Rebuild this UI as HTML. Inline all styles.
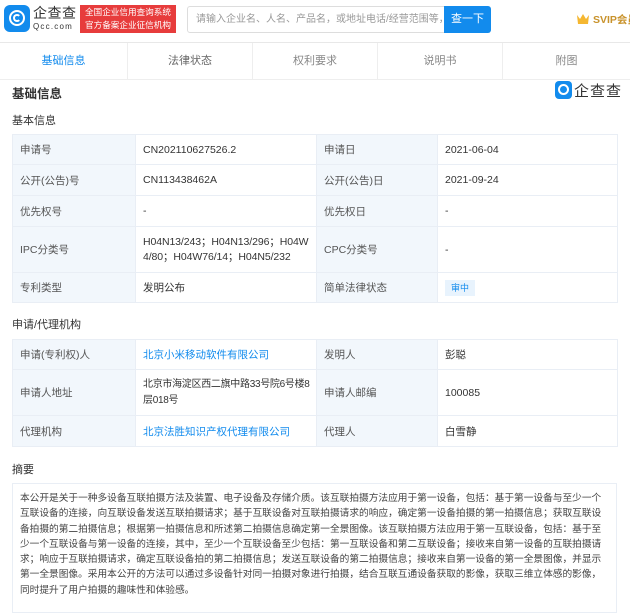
<!DOCTYPE html>
<html><head><meta charset="utf-8">
<style>
*{margin:0;padding:0;box-sizing:border-box}
body{width:630px;height:603px;overflow:hidden;background:#fff;font-family:"Liberation Sans","Noto Sans CJK SC",sans-serif;color:#333;font-size:11px;position:relative}
.abs{position:absolute}
.hdr{left:0;top:0;width:630px;height:43px;border-bottom:1px solid #e8e8e8;background:#fff}
.tabs{left:0;top:43px;width:630px;height:37px;border-bottom:1px solid #eee;display:flex}
.tabs div{flex:none;border-right:1px solid #eee;text-align:center;line-height:37px;font-size:11px;color:#666}
table{border-collapse:collapse;position:absolute;left:12px;width:605px;font-size:10.5px;table-layout:fixed}
td{border:1px solid #e9eef5;padding:0 7px;vertical-align:middle;color:#333;overflow:hidden}
td.l{background:#f2f7fc;color:#555}
a{color:#128bed;text-decoration:none}
.ab div{white-space:nowrap}
</style></head><body>
<div class="abs hdr">
 <div class="abs" style="left:4px;top:5px;width:26px;height:27px;background:#128bed;border-radius:6px"></div>
 <div class="abs" style="left:9px;top:10px;width:16px;height:16px;border:2.5px solid #fff;border-radius:50%"></div>
 <div class="abs" style="left:13px;top:14px;width:8px;height:8px;border:2px solid #fff;border-radius:50%;border-right-color:transparent"></div>
 <div class="abs" style="left:33px;top:5px;font-size:14px;line-height:16px;color:#333;letter-spacing:0.5px">企查查</div>
 <div class="abs" style="left:33px;top:22px;font-size:8px;color:#333;letter-spacing:1.2px">Qcc.com</div>
 <div class="abs" style="left:80px;top:5px;width:96px;height:28px;background:#e73c3c;color:#fff;font-size:8.6px;line-height:13px;padding-top:1px;text-align:center;white-space:nowrap">全国企业信用查询系统<br>官方备案企业征信机构</div>
 <div class="abs" style="left:187px;top:6px;width:258px;height:27px;border:1px solid #ddd;border-radius:3px 0 0 3px;color:#999;font-size:10px;line-height:25px;padding-left:8px;white-space:nowrap;overflow:hidden">请输入企业名、人名、产品名，或地址电话/经营范围等，</div>
 <div class="abs" style="left:444px;top:6px;width:47px;height:27px;background:#128bed;color:#fff;font-size:11px;line-height:27px;text-align:center;border-radius:0 3px 3px 0">查一下</div>
 <svg class="abs" style="left:576px;top:12px" width="14" height="14" viewBox="0 0 14 14"><path d="M1 3l3 4 3-5 3 5 3-4-1 9H2z" fill="#f5b731"/></svg>
 <div class="abs" style="left:593px;top:12px;font-size:10.5px;font-weight:bold;color:#c8922b;white-space:nowrap">SVIP会员</div>
</div>
<div class="abs tabs">
 <div style="width:128px;color:#128bed">基础信息</div>
 <div style="width:125px">法律状态</div>
 <div style="width:125px;color:#888">权利要求</div>
 <div style="width:125px;color:#888">说明书</div>
 <div style="width:127px;border-right:none;color:#888">附图</div>
</div>
<div class="abs" style="left:12px;top:83px;font-size:12.5px;font-weight:bold;color:#333">基础信息</div>
<div class="abs" style="left:555px;top:81px;width:17px;height:18px;background:#128bed;border-radius:4px"></div>
<div class="abs" style="left:558px;top:84px;width:11px;height:11px;border:2px solid #fff;border-radius:50%"></div>
<div class="abs" style="left:574px;top:80px;font-size:15px;color:#333;letter-spacing:1px">企查查</div>
<div class="abs" style="left:12px;top:112px;font-size:11px;color:#333">基本信息</div>
<table style="top:134px">
<colgroup><col style="width:123px"><col style="width:181px"><col style="width:121px"><col style="width:180px"></colgroup>
<tr style="height:30px"><td class="l">申请号</td><td>CN202110627526.2</td><td class="l">申请日</td><td>2021-06-04</td></tr>
<tr style="height:31px"><td class="l">公开(公告)号</td><td>CN113438462A</td><td class="l">公开(公告)日</td><td>2021-09-24</td></tr>
<tr style="height:31px"><td class="l">优先权号</td><td>-</td><td class="l">优先权日</td><td>-</td></tr>
<tr style="height:46px"><td class="l">IPC分类号</td><td style="line-height:15px;word-break:break-all;padding-right:3px;letter-spacing:-0.1px">H04N13/243；H04N13/296；H04W4/80；H04W76/14；H04N5/232</td><td class="l">CPC分类号</td><td>-</td></tr>
<tr style="height:30px"><td class="l">专利类型</td><td>发明公布</td><td class="l">简单法律状态</td><td><span style="background:#e8f3fd;color:#128bed;font-size:9px;padding:3px 6px">审中</span></td></tr>
</table>
<div class="abs" style="left:12px;top:316px;font-size:11px;color:#333">申请/代理机构</div>
<table style="top:339px">
<colgroup><col style="width:123px"><col style="width:181px"><col style="width:121px"><col style="width:180px"></colgroup>
<tr style="height:30px"><td class="l">申请(专利权)人</td><td><a>北京小米移动软件有限公司</a></td><td class="l">发明人</td><td>彭聪</td></tr>
<tr style="height:46px"><td class="l">申请人地址</td><td style="line-height:16px;white-space:nowrap;padding:0 1px 0 7px;letter-spacing:-0.3px;font-size:10px">北京市海淀区西二旗中路33号院6号楼8<br>层018号</td><td class="l">申请人邮编</td><td>100085</td></tr>
<tr style="height:31px"><td class="l">代理机构</td><td><a>北京法胜知识产权代理有限公司</a></td><td class="l">代理人</td><td>白雪静</td></tr>
</table>
<div class="abs" style="left:12px;top:461px;font-size:11px;color:#333">摘要</div>
<div class="abs ab" style="left:12px;top:483px;width:605px;height:130px;border:1px solid #e9eef5;padding:7px 5px 7px 7px;font-size:9.7px;line-height:15.3px;color:#444;overflow:hidden">
<div>本公开是关于一种多设备互联拍摄方法及装置、电子设备及存储介质。该互联拍摄方法应用于第一设备，包括：基于第一设备与至少一个</div>
<div>互联设备的连接，向互联设备发送互联拍摄请求；基于互联设备对互联拍摄请求的响应，确定第一设备拍摄的第一拍摄信息；获取互联设</div>
<div>备拍摄的第二拍摄信息；根据第一拍摄信息和所述第二拍摄信息确定第一全景图像。该互联拍摄方法应用于第一互联设备，包括：基于至</div>
<div>少一个互联设备与第一设备的连接，其中，至少一个互联设备至少包括：第一互联设备和第二互联设备；接收来自第一设备的互联拍摄请</div>
<div>求；响应于互联拍摄请求，确定互联设备拍的第二拍摄信息；发送互联设备的第二拍摄信息；接收来自第一设备的第一全景图像，并显示</div>
<div>第一全景图像。采用本公开的方法可以通过多设备针对同一拍摄对象进行拍摄，结合互联互通设备获取的影像，获取三维立体感的影像，</div>
<div>同时提升了用户拍摄的趣味性和体验感。</div>
</div>
</body></html>
